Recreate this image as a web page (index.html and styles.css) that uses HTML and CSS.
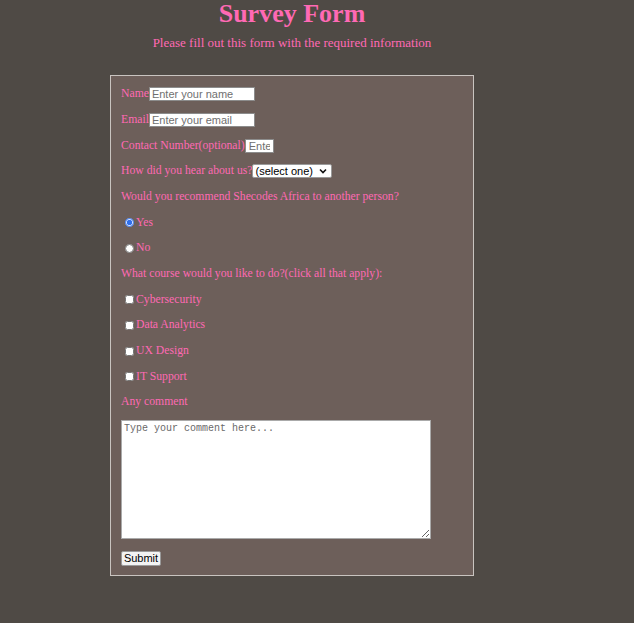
FILE: index.html
```html
<!DOCTYPE html>
<html lang="en">
<head>
<meta charset="utf-8">
<title>Survey Form</title>
<link rel="stylesheet" href="styles.css">
</head>
<body>
<div class="page">
  <h1 class="title" id="title">Survey Form</h1>
  <p class="description" id="description">Please fill out this form with the required information</p>
  <form class="survey" id="survey-form">
    <p class="row"><label for="name">Name</label><input class="text-input" id="name" type="text" placeholder="Enter your name"></p>
    <p class="row"><label for="email">Email</label><input class="text-input" id="email" type="email" placeholder="Enter your email"></p>
    <p class="row"><label for="number">Contact Number(optional)</label><input class="num-input" id="number" type="number" placeholder="Enter"></p>
    <p class="row"><label for="dropdown">How did you hear about us?</label><span class="select-wrap"><select class="select" id="dropdown"><option>(select one)</option><option>Friend</option><option>Social media</option></select><svg class="chev" width="8" height="6" viewBox="0 0 8 6"><path d="M1 1.5 L4 4.5 L7 1.5" fill="none" stroke="#111" stroke-width="1.6"/></svg></span></p>
    <p class="row">Would you recommend Shecodes Africa to another person?</p>
    <p class="row opt"><input class="radio" type="radio" name="rec" id="yes" checked><label for="yes">Yes</label></p>
    <p class="row opt"><input class="radio" type="radio" name="rec" id="no"><label for="no">No</label></p>
    <p class="row">What course would you like to do?(click all that apply):</p>
    <p class="row opt"><input class="check" type="checkbox" id="c1"><label for="c1">Cybersecurity</label></p>
    <p class="row opt"><input class="check" type="checkbox" id="c2"><label for="c2">Data Analytics</label></p>
    <p class="row opt"><input class="check" type="checkbox" id="c3"><label for="c3">UX Design</label></p>
    <p class="row opt"><input class="check" type="checkbox" id="c4"><label for="c4">IT Support</label></p>
    <p class="row">Any comment</p>
    <textarea class="comment" placeholder="Type your comment here..."></textarea>
    <button class="submit" type="submit" id="submit">Submit</button>
  </form>
</div>
</body>
</html>
```

FILE: styles.css
```css
html, body {
  margin: 0;
  background: #4f4a45;
}
body {
  font-family: "Liberation Serif", "Times New Roman", serif;
  color: #ff69b4;
  font-size: 11.7px;
}
.page {
  width: 584px;
  display: flex;
  flex-direction: column;
  align-items: center;
}
.title {
  font-size: 26px;
  font-weight: bold;
  margin: 0;
  line-height: 28px;
}
.description {
  font-size: 13px;
  margin: 7px 0 24px;
  line-height: 16px;
}
.survey {
  width: 342px;
  background: #6d5f5a;
  border: 1px solid #c9c4c0;
  padding: 4px 10px 9px;
}
.row {
  margin: 0;
  height: 25.68px;
  box-sizing: border-box;
  padding-top: 3px;
  display: flex;
  align-items: center;
  line-height: 16px;
}
.text-input, .num-input, .select {
  font-family: "Liberation Sans", Arial, sans-serif;
  font-size: 11px;
  height: 14px;
  border: 1px solid #8c8c8c;
  background: #fff;
  box-sizing: border-box;
  padding: 0 2px;
  margin: 0;
  color: #222;
}
.text-input::placeholder, .num-input::placeholder {
  color: #6f6f6f;
}
.text-input { width: 106px; }
.num-input {
  width: 29px;
  padding: 0 3px;
  -moz-appearance: textfield;
  appearance: textfield;
}
.num-input::-webkit-inner-spin-button,
.num-input::-webkit-outer-spin-button {
  -webkit-appearance: none;
  margin: 0;
}
.select-wrap {
  position: relative;
  display: inline-flex;
}
.select {
  -webkit-appearance: none;
  appearance: none;
  width: 80px;
  padding: 0 2px;
  border-radius: 2px;
  border-color: #9a9a9a;
  color: #000;
  line-height: 12px;
}
.chev {
  position: absolute;
  right: 5px;
  top: 4px;
  pointer-events: none;
}
.opt { padding-left: 3px; }
.radio, .check {
  width: 9px;
  height: 9px;
  margin: 0 2px 0 1px;
}
.radio { accent-color: #2f6fec; }
.comment {
  display: block;
  width: 310px;
  height: 119px;
  box-sizing: border-box;
  margin: 6px 0 12px;
  border: 1px solid #aaa;
  font-family: "Liberation Mono", "Courier New", monospace;
  font-size: 10px;
  padding: 2px;
  resize: both;
}
.comment::placeholder { color: #6a6a6a; }
.submit {
  display: block;
  font-family: "Liberation Sans", Arial, sans-serif;
  font-size: 11px;
  height: 15px;
  width: 40px;
  padding: 0;
  background: #f3f3f3;
  border: 1px solid #9a9a9a;
  border-radius: 2px;
  color: #000;
}
```
